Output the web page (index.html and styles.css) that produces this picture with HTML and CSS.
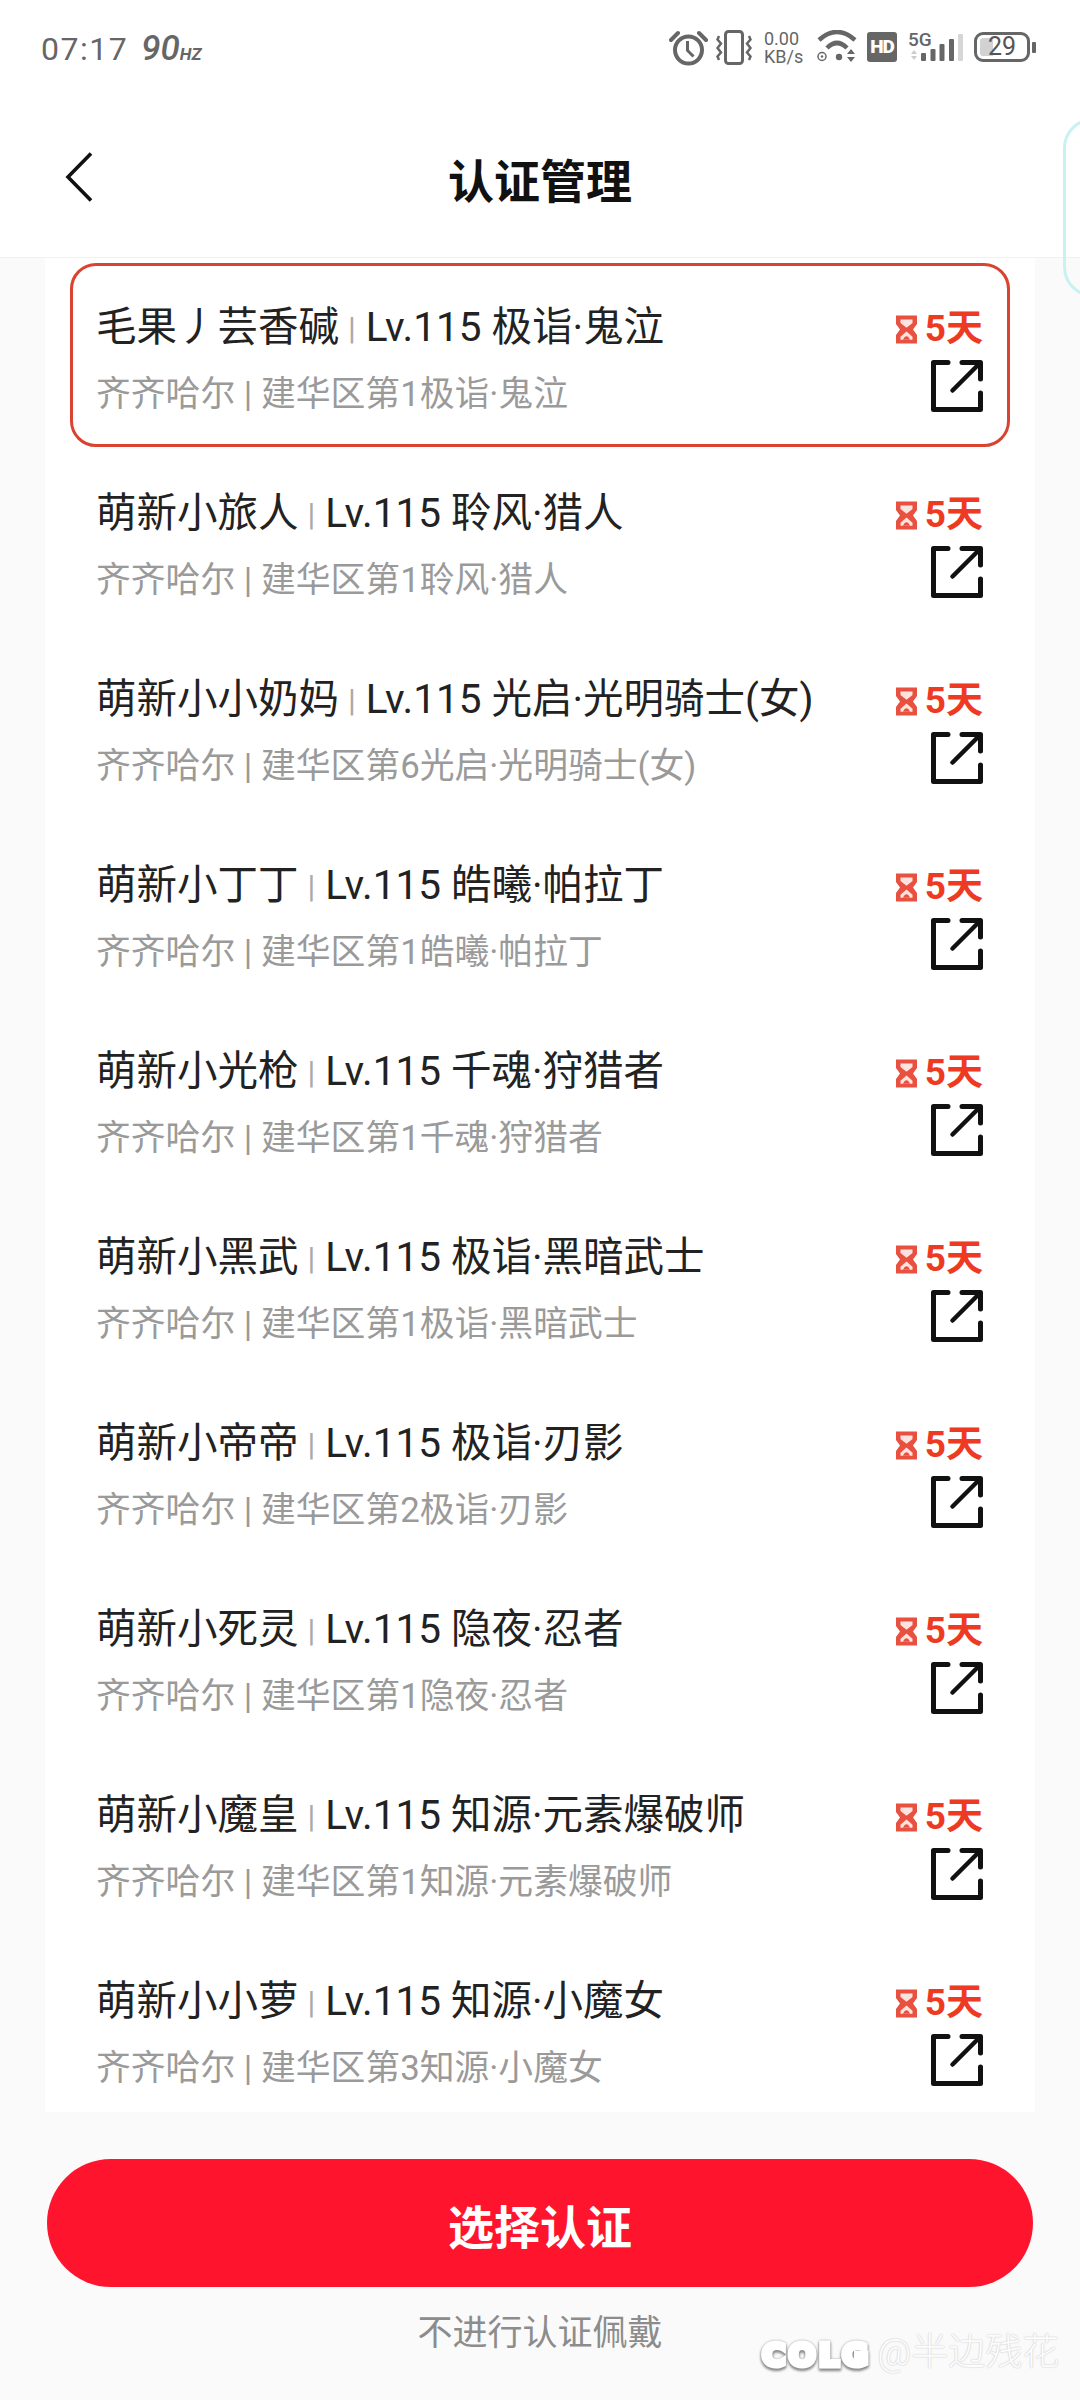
FILE: index.html
```html
<!DOCTYPE html>
<html lang="zh-CN">
<head>
<meta charset="utf-8">
<title>认证管理</title>
<link rel="stylesheet" href="styles.css">
</head>
<body>
<svg class="sprite" width="0" height="0" aria-hidden="true">
  <symbol id="hourglass" viewBox="0 0 21 29">
    <path d="M0 .5h21V9l-4 5.500 4 5.500v8.500H0V20l4-5.500L0 9z" fill="#e8503f"/>
    <path d="M4.500 4.500h12V8l-6 4.800-6-4.800z" fill="#fde3df"/>
    <path d="M10.500 16.500l6 5.300v3h-12v-3z" fill="#fde3df"/>
    <path d="M7 24.800c1-2.500 2.300-3.500 3.500-3.500s2.500 1 3.500 3.500z" fill="#e8503f"/>
  </symbol>
  <symbol id="share" viewBox="0 0 52 52">
    <path d="M17 2.500H2.500v47h47V33" fill="none" stroke="#111" stroke-width="5" stroke-linejoin="round" stroke-linecap="round"/>
    <path d="M49.500 19V2.500H31" fill="none" stroke="#111" stroke-width="5" stroke-linejoin="round" stroke-linecap="round"/>
    <path d="M47.500 4.500 21.500 30.500" fill="none" stroke="#111" stroke-width="4.500" stroke-linecap="round"/>
  </symbol>
</svg>

<div class="corner-bubble"></div>

<header class="top">
  <div class="status">
    <div class="status-left">
      <span class="clock">07:17</span>
      <span class="rate">90<small>HZ</small></span>
    </div>
    <div class="status-right">
      <svg class="ic-alarm" viewBox="0 0 40 36">
        <circle cx="19.500" cy="20" r="13.500" fill="none" stroke="#666" stroke-width="4"/>
        <path d="M18.500 11v9.500l6 6" fill="none" stroke="#666" stroke-width="3"/>
        <path d="M2 10 9 3M37 10 30 3" fill="none" stroke="#666" stroke-width="4" stroke-linecap="round"/>
      </svg>
      <svg class="ic-vibrate" viewBox="0 0 36 36">
        <rect x="9.500" y="1.500" width="17" height="32" rx="3" fill="none" stroke="#666" stroke-width="3"/>
        <path d="M3 6 1.500 9.500 5 13.500 1.500 18 5 22.500 1.500 26.500 3 30M33 6l1.500 3.500L31 13.500l3.500 4.500L31 22.500l3.500 4L33 30" fill="none" stroke="#666" stroke-width="2.500"/>
      </svg>
      <div class="speed"><span>0.00</span><span>KB/s</span></div>
      <svg class="ic-wifi" viewBox="0 0 42 33">
        <path d="M3 10Q21-6 39 10" fill="none" stroke="#666" stroke-width="4.500"/>
        <path d="M11 18Q21 8 31 18" fill="none" stroke="#666" stroke-width="4.500"/>
        <circle cx="23" cy="27" r="3.200" fill="#666"/>
        <circle cx="6" cy="26.500" r="4" fill="none" stroke="#666" stroke-width="1.500"/>
        <circle cx="6" cy="26.500" r="1.200" fill="#666"/>
        <path d="M35 19l4 5h-8zM35 32l4-5h-8z" fill="#666"/>
      </svg>
      <div class="hd">HD</div>
      <div class="net">
        <div class="net-type">
          <span>5G</span>
          <svg class="ic-arrows" viewBox="0 0 6 10"><path d="M3 0l3 4H0zM3 10l3-4H0z" fill="#ccc"/></svg>
        </div>
        <svg class="ic-signal" viewBox="0 0 38 22">
          <rect x="0" y="14" width="5" height="8" rx="1" fill="#666"/>
          <rect x="9.500" y="10" width="5" height="12" rx="1" fill="#666"/>
          <rect x="18.500" y="5" width="5" height="17" rx="1" fill="#666"/>
          <rect x="28" y="0" width="5" height="22" rx="1" fill="#666"/>
        </svg>
        <span class="signal-off"></span>
      </div>
      <div class="battery"><span class="battery-level"></span><span class="battery-num">29</span></div>
      <span class="battery-nub"></span>
    </div>
  </div>
  <nav class="nav">
    <svg class="back" viewBox="0 0 26 50"><path d="M25 1.500 2 25l23 23.500" fill="none" stroke="#111" stroke-width="3.600"/></svg>
    <h1 class="nav-title">认证管理</h1>
  </nav>
</header>

<main class="panel">
  <div class="row row-on">
    <div class="info">
      <p class="title">毛果丿芸香碱<i class="sep">|</i>Lv.115 极诣·鬼泣</p>
      <p class="sub">齐齐哈尔 | 建华区第1极诣·鬼泣</p>
    </div>
    <div class="meta">
      <span class="days"><svg class="glass"><use href="#hourglass"/></svg>5天</span>
      <svg class="link"><use href="#share"/></svg>
    </div>
  </div>
  <div class="row">
    <div class="info">
      <p class="title">萌新小旅人<i class="sep">|</i>Lv.115 聆风·猎人</p>
      <p class="sub">齐齐哈尔 | 建华区第1聆风·猎人</p>
    </div>
    <div class="meta">
      <span class="days"><svg class="glass"><use href="#hourglass"/></svg>5天</span>
      <svg class="link"><use href="#share"/></svg>
    </div>
  </div>
  <div class="row">
    <div class="info">
      <p class="title">萌新小小奶妈<i class="sep">|</i>Lv.115 光启·光明骑士(女)</p>
      <p class="sub">齐齐哈尔 | 建华区第6光启·光明骑士(女)</p>
    </div>
    <div class="meta">
      <span class="days"><svg class="glass"><use href="#hourglass"/></svg>5天</span>
      <svg class="link"><use href="#share"/></svg>
    </div>
  </div>
  <div class="row">
    <div class="info">
      <p class="title">萌新小丁丁<i class="sep">|</i>Lv.115 皓曦·帕拉丁</p>
      <p class="sub">齐齐哈尔 | 建华区第1皓曦·帕拉丁</p>
    </div>
    <div class="meta">
      <span class="days"><svg class="glass"><use href="#hourglass"/></svg>5天</span>
      <svg class="link"><use href="#share"/></svg>
    </div>
  </div>
  <div class="row">
    <div class="info">
      <p class="title">萌新小光枪<i class="sep">|</i>Lv.115 千魂·狩猎者</p>
      <p class="sub">齐齐哈尔 | 建华区第1千魂·狩猎者</p>
    </div>
    <div class="meta">
      <span class="days"><svg class="glass"><use href="#hourglass"/></svg>5天</span>
      <svg class="link"><use href="#share"/></svg>
    </div>
  </div>
  <div class="row">
    <div class="info">
      <p class="title">萌新小黑武<i class="sep">|</i>Lv.115 极诣·黑暗武士</p>
      <p class="sub">齐齐哈尔 | 建华区第1极诣·黑暗武士</p>
    </div>
    <div class="meta">
      <span class="days"><svg class="glass"><use href="#hourglass"/></svg>5天</span>
      <svg class="link"><use href="#share"/></svg>
    </div>
  </div>
  <div class="row">
    <div class="info">
      <p class="title">萌新小帝帝<i class="sep">|</i>Lv.115 极诣·刃影</p>
      <p class="sub">齐齐哈尔 | 建华区第2极诣·刃影</p>
    </div>
    <div class="meta">
      <span class="days"><svg class="glass"><use href="#hourglass"/></svg>5天</span>
      <svg class="link"><use href="#share"/></svg>
    </div>
  </div>
  <div class="row">
    <div class="info">
      <p class="title">萌新小死灵<i class="sep">|</i>Lv.115 隐夜·忍者</p>
      <p class="sub">齐齐哈尔 | 建华区第1隐夜·忍者</p>
    </div>
    <div class="meta">
      <span class="days"><svg class="glass"><use href="#hourglass"/></svg>5天</span>
      <svg class="link"><use href="#share"/></svg>
    </div>
  </div>
  <div class="row">
    <div class="info">
      <p class="title">萌新小魔皇<i class="sep">|</i>Lv.115 知源·元素爆破师</p>
      <p class="sub">齐齐哈尔 | 建华区第1知源·元素爆破师</p>
    </div>
    <div class="meta">
      <span class="days"><svg class="glass"><use href="#hourglass"/></svg>5天</span>
      <svg class="link"><use href="#share"/></svg>
    </div>
  </div>
  <div class="row">
    <div class="info">
      <p class="title">萌新小小萝<i class="sep">|</i>Lv.115 知源·小魔女</p>
      <p class="sub">齐齐哈尔 | 建华区第3知源·小魔女</p>
    </div>
    <div class="meta">
      <span class="days"><svg class="glass"><use href="#hourglass"/></svg>5天</span>
      <svg class="link"><use href="#share"/></svg>
    </div>
  </div>
</main>

<footer class="foot">
  <button class="primary" type="button">选择认证</button>
  <p class="skip">不进行认证佩戴</p>
</footer>

<div class="watermark"><span class="wm-logo">COLG</span><span class="wm-user">@半边残花</span></div>
</body>
</html>
```

FILE: styles.css
```css
* { box-sizing: border-box; }

html, body {
  margin: 0;
  height: 2400px;
}

body {
  width: 1080px;
  position: relative;
  display: flex;
  flex-direction: column;
  overflow: hidden;
  background: #fafafa;
  font-family: Roboto, "Noto Sans CJK SC", sans-serif;
}

.sprite { position: absolute; }

/* top area: system bar and title bar */
.top {
  flex: none;
  height: 258px;
  background: #fff;
  border-bottom: 1px solid #f0f0f0;
}

.status {
  height: 96px;
  padding: 28px 44px 0 41px;
  display: flex;
  justify-content: space-between;
  align-items: flex-start;
  color: #666;
}

.status-left {
  display: flex;
  align-items: baseline;
  margin-top: 1px;
}

.clock {
  font-size: 32px;
  line-height: 40px;
  letter-spacing: 1.500px;
}

.rate {
  margin-left: 13px;
  font-size: 35px;
  line-height: 40px;
  font-style: italic;
  font-weight: 500;
}

.rate small {
  font-size: 17px;
  font-weight: 700;
}

.status-right {
  display: flex;
  align-items: flex-start;
  margin-top: 2px;
}

.ic-alarm { width: 40px; height: 36px; }
.ic-vibrate { width: 36px; height: 36px; margin-left: 7px; }

.speed {
  width: 42px;
  margin-left: 12px;
  display: flex;
  flex-direction: column;
  font-size: 18px;
  line-height: 18px;
}

.ic-wifi { width: 42px; height: 33px; margin-left: 10px; }

.hd {
  width: 30px;
  height: 30px;
  margin: 2px 0 0 9px;
  border-radius: 3px;
  background: #666;
  color: #fff;
  font-size: 19px;
  font-weight: 900;
  line-height: 30px;
  text-align: center;
  letter-spacing: -1px;
}

.net {
  display: flex;
  align-items: flex-end;
  height: 31px;
  margin-left: 11px;
}

.net-type {
  display: flex;
  flex-direction: column;
  align-items: flex-start;
  width: 13px;
  height: 31px;
  font-size: 19px;
  line-height: 19px;
  font-weight: 500;
  white-space: nowrap;
}

.ic-arrows { width: 6px; height: 10px; margin: 1px 0 0 3px; }
.ic-signal { width: 38px; height: 22px; margin-right: -1px; flex: none; }

.signal-off {
  width: 5px;
  height: 27px;
  border-radius: 1px;
  background: #d6d6d6;
}

.battery {
  position: relative;
  width: 56px;
  height: 30px;
  margin: 2px 0 0 11px;
  border: 3px solid #666;
  border-radius: 9px;
  color: #555;
  font-size: 25px;
  line-height: 24px;
  text-align: center;
}

.battery-level {
  position: absolute;
  left: 3px;
  top: 3px;
  bottom: 3px;
  width: 13px;
  border-radius: 3px 0 0 3px;
  background: #d2d2d2;
}

.battery-num { position: relative; }

.battery-nub {
  width: 4px;
  height: 11px;
  margin: 12px 0 0 2px;
  border-radius: 1px;
  background: #666;
}

.nav {
  height: 161px;
  padding-left: 65px;
  display: flex;
  align-items: center;
}

.back { width: 28px; height: 50px; flex: none; }

.nav-title {
  margin: 11px 0 0 355px;
  font-size: 46px;
  line-height: 60px;
  font-weight: 700;
  color: #111;
}

/* list of certifications */
.panel {
  flex: none;
  height: 1854px;
  margin: 0 45px;
  padding: 5px 25px 0;
  background: #fff;
  overflow: hidden;
}

.row {
  height: 184px;
  margin-bottom: 2px;
  padding: 37px 24px 0 23px;
  display: flex;
  justify-content: space-between;
  border: 3px solid transparent;
  border-radius: 26px;
}

.row-on { border-color: #d9432f; }

.title, .sub { margin: 0; white-space: nowrap; }

.title {
  font-size: 40.500px;
  line-height: 48px;
  color: #222;
}

.sep {
  margin: 0 10px 0 9px;
  font-style: normal;
  font-size: 32px;
  color: #aaa;
  vertical-align: 2px;
}

.sub {
  margin-top: 18px;
  font-size: 34.800px;
  line-height: 48px;
  color: #9a9a9a;
}

.meta {
  display: flex;
  flex-direction: column;
  align-items: flex-end;
  margin-top: -1px;
}

.days {
  display: flex;
  align-items: center;
  height: 44px;
  margin-top: 5px;
  color: #ee3a22;
  font-size: 37px;
  font-weight: 700;
  line-height: 44px;
}

.glass { width: 21px; height: 29px; margin-right: 8px; }

.link { width: 52px; height: 52px; margin-top: 9px; }

/* bottom action area */
.foot {
  flex: 1;
  padding: 47px 47px 0;
  display: flex;
  flex-direction: column;
  align-items: center;
}

.primary {
  width: 100%;
  height: 128px;
  flex: none;
  padding: 9px 0 0;
  border: 0;
  border-radius: 64px;
  background: #ff142d;
  color: #fff;
  font: 700 46px/60px Roboto, "Noto Sans CJK SC", sans-serif;
}

.skip {
  margin: 24px 0 0;
  font-size: 35px;
  line-height: 46px;
  color: #8c8c8c;
}

/* overlays */
.corner-bubble {
  position: absolute;
  left: 1063px;
  top: 118px;
  width: 60px;
  height: 179px;
  border: 3px solid #c9f1f3;
  border-radius: 30px;
  z-index: 2;
}

.watermark {
  position: absolute;
  left: 762px;
  top: 2328px;
  display: flex;
  align-items: center;
  z-index: 2;
  white-space: nowrap;
}

.wm-logo {
  margin-top: 6px;
  font-family: "DejaVu Sans", sans-serif;
  font-size: 32px;
  font-weight: 700;
  letter-spacing: 3px;
  color: #fff;
  -webkit-text-stroke: 5px #fff;
  paint-order: stroke fill;
  stroke-linejoin: round;
  filter: drop-shadow(0 2px 1px #8a8a8a) drop-shadow(0 0 1px #aaa);
}

.wm-user {
  margin: -6px 0 0 6px;
  font-size: 37px;
  font-weight: 300;
  color: #fdfdfd;
  text-shadow: 0 0 2px #cfcfcf, 0 0 1px #c8c8c8;
}
```
